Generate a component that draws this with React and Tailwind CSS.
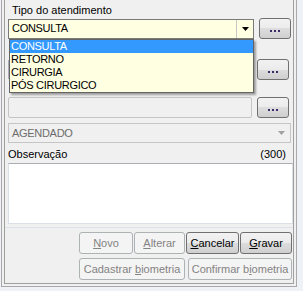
const btnEnabled =
  "flex items-center justify-center rounded-[3px] border border-[#707070] bg-[linear-gradient(#f2f2f2_0%,#ebebeb_50%,#dddddd_50%,#cfcfcf_100%)] text-black";
const btnDisabled =
  "flex items-center justify-center rounded-[3px] border border-[#adb2b5] bg-[#f4f4f4] text-[#838383]";

function Dots({ className = "" }) {
  return (
    <button className={`${btnEnabled} w-[32px] h-[21px] shrink-0 ${className}`}>
      <span className="flex gap-[2px] mt-[5px]">
        <span className="w-[2px] h-[2px] bg-[#3a2a6a]" />
        <span className="w-[2px] h-[2px] bg-[#3a2a6a]" />
        <span className="w-[2px] h-[2px] bg-[#3a2a6a]" />
      </span>
    </button>
  );
}

function U({ children }) {
  return <span className="underline underline-offset-[1px]">{children}</span>;
}

export default function App() {
  return (
    <div className="relative w-[303px] h-[291px] bg-[#eef1f5] overflow-hidden font-['Liberation_Sans',Arial,sans-serif] text-[11px] text-black">
      <div className="ml-[1px] w-[296px] h-[287px] border-l border-r border-b border-[#a9a9a9] bg-[#f0f0f0]">
        <div className="relative ml-[2px] w-[290px] h-[284px] border-l border-r border-b border-[#a0a0a0] pl-[3px] flex flex-col">
          <div className="mt-[3px] h-[14px] leading-[14px] pl-[4px]">Tipo do atendimento</div>

          {/* Row 1 */}
          <div className="mt-[1px] flex items-center h-[21px]">
            <div className="w-[246px] h-[20px] border border-[#7a7a7a] bg-[#ffffe1] flex items-center">
              <span className="flex-1 pl-[3px] tracking-[-0.3px]">CONSULTA</span>
              <div className="w-[17px] h-full border-l border-[#c8c8c8] flex items-center justify-center">
                <svg width="7" height="4" viewBox="0 0 7 4">
                  <path d="M0 0H7L3.5 4Z" fill="#000" />
                </svg>
              </div>
            </div>
            <Dots className="ml-[5px]" />
          </div>

          {/* Row 2 (label hidden under the open list; only a tick peeks out) */}
          <div className="mt-[4px] h-[14px] pl-[1px] pt-[4px]">
            <div className="w-px h-[3px] bg-[#555]" />
          </div>
          <div className="mt-[2px] flex items-center h-[21px]">
            <div className="w-[244px] h-[21px] rounded-[2px] border border-[#abadb3] bg-[#f0f0f0]" />
            <Dots className="ml-[5px]" />
          </div>

          {/* Row 3 */}
          <div className="mt-[17px] flex items-center h-[21px]">
            <div className="w-[244px] h-[21px] rounded-[2px] border border-[#c5c5c5] bg-[#f0f0f0]" />
            <Dots className="ml-[5px]" />
          </div>

          {/* Status combo */}
          <div className="mt-[5px] w-[283px] h-[20px] border border-[#c5c5c5] bg-[#f0f0f0] flex items-center">
            <span className="flex-1 pl-[3px] text-[#6d6d6d] tracking-[-0.3px]">AGENDADO</span>
            <div className="w-[17px] h-full flex items-center justify-center">
              <svg width="7" height="4" viewBox="0 0 7 4">
                <path d="M0 0H7L3.5 4Z" fill="#a0a0a0" />
              </svg>
            </div>
          </div>

          <div className="mt-[4px] h-[14px] leading-[14px] flex justify-between w-[278px]">
            <span>Observação</span>
            <span>(300)</span>
          </div>

          <div className="mt-[2px] w-[285px] h-[61px] bg-white border border-[#dbdfe6] border-t-[#abadb3]" />
          <div className="mt-[3px] -ml-[3px] w-[288px] h-px bg-[#dce2e8]" />

          {/* Buttons */}
          <div className="mt-[4px] ml-[71px] flex gap-[1px] h-[22px]">
            <button className={`${btnDisabled} w-[54px]`}><U>N</U>ovo</button>
            <button className={`${btnDisabled} w-[51px]`}><U>A</U>lterar</button>
            <button className={`${btnEnabled} w-[53px]`}><U>C</U>ancelar</button>
            <button className={`${btnEnabled} w-[52px]`}><U>G</U>ravar</button>
          </div>
          <div className="mt-[4px] ml-[71px] flex gap-[3px] h-[22px]">
            <button className={`${btnDisabled} w-[106px]`}>Cadastrar&nbsp;<U>b</U>iometria</button>
            <button className={`${btnDisabled} w-[104px]`}>Confirmar&nbsp;b<U>i</U>ometria</button>
          </div>

          {/* Dropdown list overlay */}
          <div className="absolute left-[4px] top-[39px] w-[245px] h-[54px] border border-[#646464] bg-[#ffffe1] shadow-[2px_2px_2px_rgba(0,0,0,0.35)] tracking-[-0.3px] leading-[13px]">
            <div className="h-[13px] bg-[#3399ff] text-white pl-[1px]">CONSULTA</div>
            <div className="h-[13px] pl-[1px]">RETORNO</div>
            <div className="h-[13px] pl-[1px]">CIRURGIA</div>
            <div className="h-[13px] pl-[1px]">PÓS CIRURGICO</div>
          </div>
        </div>
      </div>
    </div>
  );
}
